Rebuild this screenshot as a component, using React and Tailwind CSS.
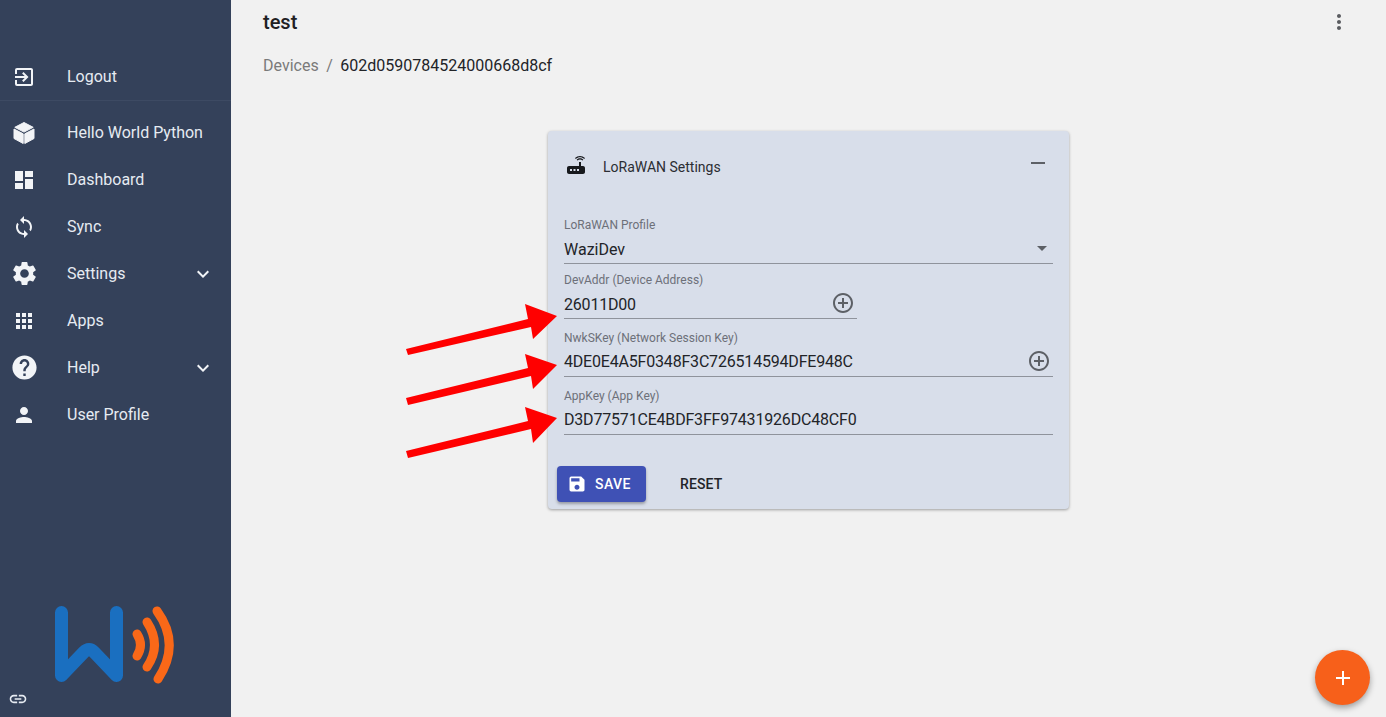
import React from "react";
import {
  MdExitToApp, MdDashboard, MdSync, MdSettings, MdApps, MdHelp, MdPerson, MdExpandMore, MdLink,
  MdSave, MdAdd, MdRemove, MdArrowDropDown, MdMoreVert, MdAddCircleOutline, MdRouter,
} from "react-icons/md";

const CubeIcon = ({ size = 24 }) => (
  <svg width={size} height={size} viewBox="0 0 24 24" fill="currentColor" stroke="currentColor" strokeWidth="1" strokeLinejoin="round">
    <path d="M12 1.500L21.200 6.300L12 11.100L2.800 6.300Z" />
    <path d="M2 8L11.200 12.800V22.500L2 17.500Z" />
    <path d="M22 8L12.800 12.800V22.500L22 17.500Z" />
  </svg>
);

const NavItem = ({ icon: Icon, label, size = 24, expand }) => (
  <div className="flex h-[47px] items-center text-[16px] text-[#e6ebf2]">
    <div className="flex w-[67px] shrink-0 items-center pl-[12px]">
      <div className="flex h-6 w-6 items-center justify-center text-[#f2f4f7]">
        <Icon size={size} className="shrink-0" />
      </div>
    </div>
    <span className="flex-1">{label}</span>
    {expand && <MdExpandMore size={24} className="mr-[16px] text-[#f2f4f7]" />}
  </div>
);

const Field = ({ label, value, width = "w-full", className = "", rowClass = "pt-[4px]", addon }) => (
  <div className={`flex flex-col ${width} ${className}`}>
    <div className="text-[12px] leading-4 text-[#6d7079]">{label}</div>
    <div className={`flex h-[31px] items-center justify-between border-b border-[#8f939c] text-[16px] tracking-[-0.19px] text-[#222428] ${rowClass}`}>
      <span>{value}</span>
      {addon}
    </div>
  </div>
);

export default function App() {
  return (
    <div className="relative flex h-[717px] w-[1386px] overflow-hidden bg-[#f1f1f1]" style={{ fontFamily: "Roboto, sans-serif" }}>
      <aside className="flex h-full w-[231px] shrink-0 flex-col bg-[#34415a]">
        <div className="border-b border-[#3d4a63] pt-[53px]">
          <NavItem icon={MdExitToApp} label="Logout" />
        </div>
        <div className="pt-[8px]">
          <NavItem icon={CubeIcon} label="Hello World Python" />
          <NavItem icon={MdDashboard} label="Dashboard" />
          <NavItem icon={MdSync} label="Sync" />
          <NavItem icon={MdSettings} label="Settings" size={29} expand />
          <NavItem icon={MdApps} label="Apps" />
          <NavItem icon={MdHelp} label="Help" size={29} expand />
          <NavItem icon={MdPerson} label="User Profile" />
        </div>
        <div className="mt-auto pl-[50px]">
          <svg width="130" height="84" viewBox="50 602 130 84" fill="none" strokeLinecap="round" strokeLinejoin="round" className="block">
            <path d="M61.500 612.500V675.500L84 652Q89 647 94 652L116.500 675.500V612.500" stroke="#1a6fc0" strokeWidth="13" />
            <path d="M137 634Q144 645 137 656" stroke="#f96818" strokeWidth="9" />
            <path d="M147 622Q162 645 147 667" stroke="#f96818" strokeWidth="9" />
            <path d="M157 611Q181 644 158 679" stroke="#f96818" strokeWidth="9" />
          </svg>
        </div>
        <div className="mt-[3px] flex h-[28px] items-start pl-[8px] text-[#e6ebf2]">
          <MdLink size={20} />
        </div>
      </aside>

      <main className="flex min-w-0 flex-1 flex-col">
        <header className="flex h-[45px] items-center justify-between pl-[32px] pr-[35px]">
          <h1 className="-mt-[2px] text-[20px] font-medium text-[#1f2023]">test</h1>
          <MdMoreVert size={24} className="-mt-[2px] text-[#5a5c60]" />
        </header>
        <nav className="mt-[9px] flex h-6 items-center pl-[32px] text-[16px]">
          <span className="text-[#7a7a7a]">Devices</span>
          <span className="mx-[7.500px] text-[#7a7a7a]">/</span>
          <span className="text-[#222428]">602d0590784524000668d8cf</span>
        </nav>
        <section className="mt-[53px] ml-[317px] flex w-[521px] flex-col rounded-[4px] bg-[#d8deea] shadow-[0_1px_3px_rgba(0,0,0,0.35)]">
          <div className="flex h-[86px] items-start pl-[16px] pr-[19px] pt-[20px]">
            <MdRouter size={24} className="mt-[2px] text-[#17191d]" />
            <span className="ml-[15px] mt-[6px] text-[14px] text-[#2b2d33]">LoRaWAN Settings</span>
            <MdRemove size={24} className="ml-auto text-[#5d6066]" />
          </div>
          <div className="flex flex-col px-[16px]">
            <div className="flex flex-col">
              <div className="text-[12px] leading-4 text-[#6d7079]">LoRaWAN Profile</div>
              <div className="flex h-[31px] items-center justify-between border-b border-[#8f939c] pt-[4px] text-[16px] text-[#222428]">
                <span>WaziDev</span>
                <MdArrowDropDown size={24} className="-mr-[1px] -mt-[4px] text-[#5d6066]" />
              </div>
            </div>
            <Field
              className="mt-[8px]"
              width="w-[293px]"
              label="DevAddr (Device Address)"
              value="26011D00"
              addon={<MdAddCircleOutline size={24} className="mr-[2px] -mt-[5px] text-[#5d6066]" />}
            />
            <Field
              className="mt-[11px]"
              rowClass="pt-[2px]"
              label="NwkSKey (Network Session Key)"
              value="4DE0E4A5F0348F3C726514594DFE948C"
              addon={<MdAddCircleOutline size={24} className="mr-[2px] -mt-[3px] text-[#5d6066]" />}
            />
            <Field className="mt-[11px]" rowClass="pt-[2px]" label="AppKey (App Key)" value="D3D77571CE4BDF3FF97431926DC48CF0" />
          </div>
          <div className="mb-[7px] ml-[9px] mt-[31px] flex items-center">
            <button className="flex h-9 w-[89px] items-center gap-[8px] rounded-[4px] bg-[#3f51b5] pl-[10px] text-[14px] font-medium tracking-[0.4px] text-white shadow-[0_2px_3px_rgba(0,0,0,0.3)]">
              <MdSave size={20} />
              SAVE
            </button>
            <button className="ml-[34px] text-[14px] font-medium tracking-[0.1px] text-[#222428]">RESET</button>
          </div>
        </section>
      </main>

      <svg className="pointer-events-none absolute left-0 top-0" width="1386" height="717" fill="#ff0000">
        <polygon points="406,349 528,319 525,304 557,316 533,339 531,327 408,355" />
        <polygon points="406,398 528,368 525,354 557,365 533,389 531,376 408,405" />
        <polygon points="406,451 528,421 525,407 557,418 533,443 531,429 408,458" />
      </svg>

      <button className="absolute bottom-[12px] right-[16px] flex h-[55px] w-[55px] items-center justify-center rounded-full bg-[#f7601a] text-white shadow-[0_3px_6px_rgba(0,0,0,0.35)]">
        <MdAdd size={24} />
      </button>
    </div>
  );
}
